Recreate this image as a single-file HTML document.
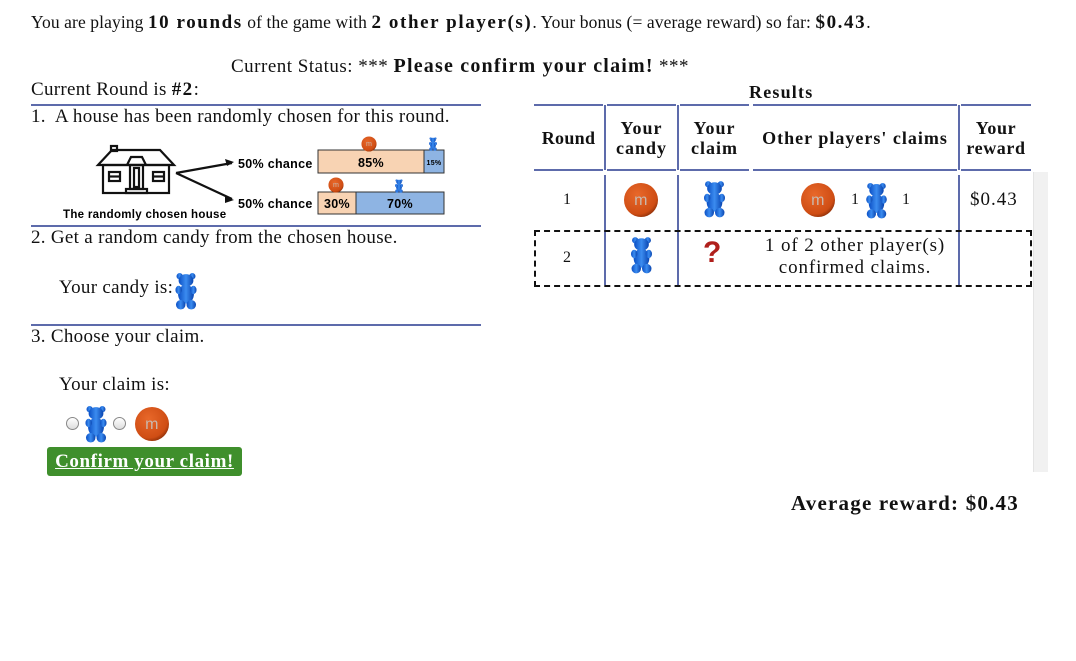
<!DOCTYPE html>
<html><head><meta charset="utf-8">
<style>
body{margin:0;width:1076px;height:661px;background:#fff;position:relative;overflow:hidden;font-family:"Liberation Serif",serif;font-size:19px;letter-spacing:0.3px;color:#111}
.a{position:absolute;white-space:nowrap}
.hl{position:absolute;height:2px;background:#5d6bab}
.vl{position:absolute;width:2px;background:#5d6bab}
.th{position:absolute;text-align:center;font-weight:bold;font-size:18px;letter-spacing:1px;line-height:20px}
b{letter-spacing:1.4px}
</style></head><body>
<svg width="0" height="0" style="position:absolute">
<defs>
<linearGradient id="bg" x1="0" x2="1"><stop offset="0" stop-color="#0b4fc4"/><stop offset=".5" stop-color="#3b8cf0"/><stop offset="1" stop-color="#0a45b0"/></linearGradient>
<radialGradient id="mg" cx=".4" cy=".35" r=".7"><stop offset="0" stop-color="#e8682a"/><stop offset=".8" stop-color="#cf4d14"/><stop offset="1" stop-color="#8a2e08"/></radialGradient>
<symbol id="bear" viewBox="0 0 20 36"><g fill="url(#bg)"><circle cx="4" cy="4" r="3"/><circle cx="16" cy="4" r="3"/><ellipse cx="10" cy="8" rx="7" ry="6"/><ellipse cx="10" cy="21" rx="7.5" ry="9"/><ellipse cx="3" cy="17" rx="3" ry="4"/><ellipse cx="17" cy="17" rx="3" ry="4"/><ellipse cx="5" cy="31" rx="4.5" ry="4.5"/><ellipse cx="15" cy="31" rx="4.5" ry="4.5"/></g></symbol>
<symbol id="mm" viewBox="0 0 36 36"><circle cx="18" cy="18" r="17" fill="url(#mg)"/><text x="18" y="23" text-anchor="middle" font-family="Liberation Sans,sans-serif" font-size="16" fill="#c9b8ad">m</text></symbol>
</defs></svg>

<div class="a" style="left:31px;top:12px;font-size:17.5px;letter-spacing:0.1px">You are playing <b style="font-size:19px;letter-spacing:1.6px">10 rounds</b> of the game with <b style="font-size:19px;letter-spacing:1.6px">2 other player(s)</b>. Your bonus (= average reward) so far: <b style="font-size:19px;letter-spacing:1.6px">$0.43</b>.</div>
<div class="a" style="left:231px;top:55px;letter-spacing:0.5px">Current Status: *** <b style="font-size:20px;letter-spacing:1.2px">Please confirm your claim!</b> ***</div>
<div class="a" style="left:31px;top:79px">Current Round is <b>#2</b>:</div>
<div class="hl" style="left:31px;top:104px;width:450px"></div>
<div class="a" style="left:31px;top:106px">1.&nbsp; A house has been randomly chosen for this round.</div>

<!-- house image -->
<svg class="a" style="left:62px;top:135px" width="390" height="90">
<g fill="none" stroke="#111" stroke-width="2.2">
<path d="M36 30 L50 15 L98 15 L112 30 Z"/><rect x="49" y="11" width="6" height="5"/><rect x="41" y="30" width="66" height="28"/>
<path d="M65 30 L69 22 L80 22 L84 30"/><rect x="68" y="30" width="13" height="24"/><rect x="72" y="33" width="5" height="19"/>
<rect x="47" y="37" width="11" height="9"/><line x1="47" y1="41.5" x2="58" y2="41.5"/>
<rect x="91" y="37" width="11" height="9"/><line x1="91" y1="41.5" x2="102" y2="41.5"/>
<rect x="64" y="54" width="21" height="4"/>
<path d="M114 38 L170 28 M114 38 L170 64"/></g>
<path d="M172 27 L163 24 L165 31 Z M172 65 L163 61 L163 68 Z" fill="#111"/>
<text x="1" y="83" font-family="Liberation Sans,sans-serif" font-weight="bold" font-size="11.5">The randomly chosen house</text>
<text x="176" y="33" font-family="Liberation Sans,sans-serif" font-weight="bold" font-size="12.5">50% chance</text>
<text x="176" y="73" font-family="Liberation Sans,sans-serif" font-weight="bold" font-size="12.5">50% chance</text>
<rect x="256" y="15" width="106" height="23" fill="#f8d3b3" stroke="#333"/><rect x="362" y="15" width="20" height="23" fill="#8eb4e3" stroke="#333"/>
<text x="309" y="32" text-anchor="middle" font-family="Liberation Sans,sans-serif" font-weight="bold" font-size="12.5">85%</text>
<text x="372" y="30" text-anchor="middle" font-family="Liberation Sans,sans-serif" font-weight="bold" font-size="7">15%</text>
<rect x="256" y="57" width="38" height="22" fill="#f8d3b3" stroke="#333"/><rect x="294" y="57" width="88" height="22" fill="#8eb4e3" stroke="#333"/>
<text x="275" y="73" text-anchor="middle" font-family="Liberation Sans,sans-serif" font-weight="bold" font-size="12.5">30%</text>
<text x="338" y="73" text-anchor="middle" font-family="Liberation Sans,sans-serif" font-weight="bold" font-size="12.5">70%</text>
<use href="#mm" x="299" y="1" width="16" height="16"/><use href="#bear" x="367" y="2" width="8" height="14"/>
<use href="#mm" x="266" y="42" width="16" height="16"/><use href="#bear" x="333" y="44" width="8" height="14"/>
</svg>

<div class="hl" style="left:31px;top:225px;width:450px"></div>
<div class="a" style="left:31px;top:227px">2. Get a random candy from the chosen house.</div>
<div class="a" style="left:59px;top:277px">Your candy is:</div>
<svg class="a" style="left:175px;top:272px" width="22" height="38"><use href="#bear" width="22" height="38"/></svg>
<div class="hl" style="left:31px;top:324px;width:450px"></div>
<div class="a" style="left:31px;top:326px">3. Choose your claim.</div>
<div class="a" style="left:59px;top:374px">Your claim is:</div>
<div class="a" style="left:66px;top:417px;width:11px;height:11px;border:1px solid #888;border-radius:50%;background:linear-gradient(#fff,#ddd)"></div>
<svg class="a" style="left:85px;top:405px" width="22" height="38"><use href="#bear" width="22" height="38"/></svg>
<div class="a" style="left:113px;top:417px;width:11px;height:11px;border:1px solid #888;border-radius:50%;background:linear-gradient(#fff,#ddd)"></div>
<svg class="a" style="left:134px;top:406px" width="36" height="36"><use href="#mm" width="36" height="36"/></svg>
<div class="a" style="left:47px;top:447px;width:195px;height:29px;background:#3f8f2c;border-radius:3px;color:#fff;font-weight:bold;text-decoration:underline;text-align:center;line-height:29px;font-size:19px;letter-spacing:0.6px">Confirm your claim!</div>

<!-- Results -->
<div class="a" style="left:749px;top:82px;font-weight:bold;font-size:18px;letter-spacing:1.2px">Results</div>
<div class="hl" style="left:534px;top:104px;width:69px"></div>
<div class="hl" style="left:607px;top:104px;width:69px"></div>
<div class="hl" style="left:680px;top:104px;width:69px"></div>
<div class="hl" style="left:753px;top:104px;width:204px"></div>
<div class="hl" style="left:961px;top:104px;width:70px"></div>
<div class="hl" style="left:534px;top:169px;width:69px"></div>
<div class="hl" style="left:607px;top:169px;width:69px"></div>
<div class="hl" style="left:680px;top:169px;width:69px"></div>
<div class="hl" style="left:753px;top:169px;width:204px"></div>
<div class="hl" style="left:961px;top:169px;width:70px"></div>
<div class="vl" style="left:604px;top:105px;height:65px"></div>
<div class="vl" style="left:677px;top:105px;height:65px"></div>
<div class="vl" style="left:958px;top:105px;height:65px"></div>
<div class="vl" style="left:604px;top:175px;height:110px"></div>
<div class="vl" style="left:677px;top:175px;height:110px"></div>
<div class="vl" style="left:958px;top:175px;height:110px"></div>
<div class="th" style="left:534px;top:128px;width:69px;letter-spacing:0.3px">Round</div>
<div class="th" style="left:607px;top:118px;width:69px">Your<br>candy</div>
<div class="th" style="left:680px;top:118px;width:69px">Your<br>claim</div>
<div class="th" style="left:753px;top:128px;width:204px">Other players' claims</div>
<div class="th" style="left:961px;top:118px;width:70px;letter-spacing:0.6px">Your<br>reward</div>

<div class="a" style="left:563px;top:191px;font-size:16px">1</div>
<svg class="a" style="left:623px;top:182px" width="36" height="36"><use href="#mm" width="36" height="36"/></svg>
<svg class="a" style="left:704px;top:180px" width="21" height="38"><use href="#bear" width="21" height="38"/></svg>
<svg class="a" style="left:800px;top:182px" width="36" height="36"><use href="#mm" width="36" height="36"/></svg>
<div class="a" style="left:851px;top:191px;font-size:16px">1</div>
<svg class="a" style="left:866px;top:182px" width="21" height="37"><use href="#bear" width="21" height="37"/></svg>
<div class="a" style="left:902px;top:191px;font-size:16px">1</div>
<div class="a" style="left:970px;top:189px;font-size:19px;letter-spacing:1px">$0.43</div>

<div class="a" style="left:534px;top:230px;width:494px;height:53px;border:2px dashed #111"></div>
<div class="a" style="left:563px;top:249px;font-size:16px">2</div>
<svg class="a" style="left:631px;top:236px" width="21" height="38"><use href="#bear" width="21" height="38"/></svg>
<div class="a" style="left:703px;top:236px;color:#b0201c;font-family:'Liberation Sans',sans-serif;font-weight:bold;font-size:30px">?</div>
<div class="a" style="left:753px;top:235px;width:204px;text-align:center;line-height:22px;letter-spacing:0.9px">1 of 2 other player(s)<br>confirmed claims.</div>

<div class="a" style="left:1033px;top:172px;width:14px;height:300px;background:#f1f1f1;border-left:1px solid #e4e4e4"></div>
<div class="a" style="left:791px;top:491px;font-weight:bold;font-size:21px;letter-spacing:1.2px">Average reward: $0.43</div>
</body></html>
